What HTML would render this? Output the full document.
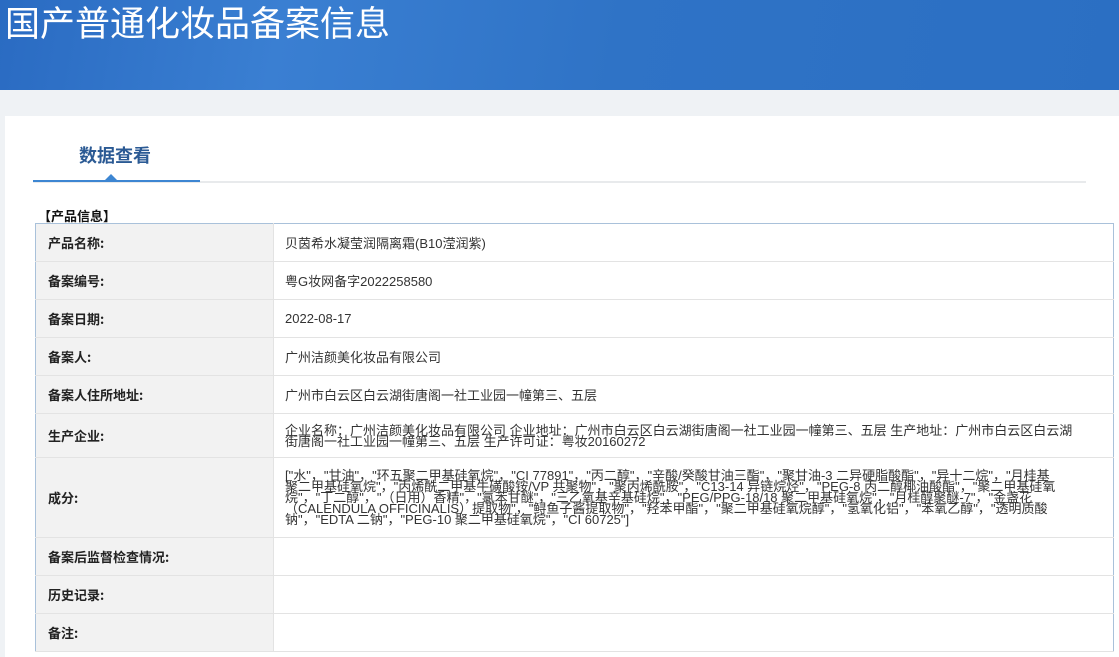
<!DOCTYPE html>
<html><head><meta charset="utf-8"><style>
*{margin:0;padding:0;box-sizing:border-box}
body{width:1119px;height:657px;overflow:hidden;background:#eff2f5;font-family:"Liberation Sans","Noto Sans CJK SC",sans-serif;position:relative}
.hdr{position:absolute;left:0;top:0;width:1119px;height:90px;background:linear-gradient(100deg,#2a6bc2 0%,#3a7fd2 25%,#2f73c6 55%,#2b6fc3 100%)}
.hdr h1{position:absolute;left:5px;top:-4px;color:#fff;font-weight:normal;font-size:35px;font-family:"Noto Sans CJK SC",sans-serif}
.panel{position:absolute;left:5px;top:116px;width:1114px;height:541px;background:#fff}
.tab{position:absolute;left:79px;top:142px;font-size:18px;font-weight:bold;color:#2b5a94;font-family:"Noto Sans CJK SC",sans-serif}
.gl{position:absolute;left:33px;top:181px;width:1053px;height:2px;background:#e8eaec}
.bl{position:absolute;left:33px;top:180px;width:167px;height:2px;background:#3d86d2}
.tri{position:absolute;left:105px;top:174px;width:0;height:0;border-left:6px solid transparent;border-right:6px solid transparent;border-bottom:6px solid #3d86d2}
.sec{position:absolute;left:38px;top:206px;font-size:13px;font-weight:bold;color:#111;font-family:"Noto Sans CJK SC",sans-serif}
table{position:absolute;left:35px;top:223px;width:1079px;border-collapse:collapse;border:1px solid #a9c1da;font-size:13px;color:#333;font-family:"Liberation Sans","Noto Sans CJK SC",sans-serif}
td{border-bottom:1px solid #e3e3e3;vertical-align:middle}
td.l{width:238px;background:#f2f2f2;padding-left:12px;font-weight:bold;font-size:13px;color:#222;border-right:1px solid #e3e3e3;font-family:"Noto Sans CJK SC",sans-serif}
td.v{padding-left:11px;padding-right:55px}
td.p{padding-right:40px}
.t{line-height:11px}
</style></head><body>
<div class="hdr"><h1>国产普通化妆品备案信息</h1></div>
<div class="panel"></div>
<div class="tab">数据查看</div>
<div class="gl"></div><div class="bl"></div><div class="tri"></div>
<div class="sec">【产品信息】</div>
<table>
<tr style="height:38px"><td class="l">产品名称:</td><td class="v">贝茵希水凝莹润隔离霜(B10滢润紫)</td></tr>
<tr style="height:38px"><td class="l">备案编号:</td><td class="v">粤G妆网备字2022258580</td></tr>
<tr style="height:38px"><td class="l">备案日期:</td><td class="v">2022-08-17</td></tr>
<tr style="height:38px"><td class="l">备案人:</td><td class="v">广州洁颜美化妆品有限公司</td></tr>
<tr style="height:38px"><td class="l">备案人住所地址:</td><td class="v">广州市白云区白云湖街唐阁一社工业园一幢第三、五层</td></tr>
<tr style="height:44px"><td class="l">生产企业:</td><td class="v t p">企业名称：广州洁颜美化妆品有限公司 企业地址：广州市白云区白云湖街唐阁一社工业园一幢第三、五层 生产地址：广州市白云区白云湖街唐阁一社工业园一幢第三、五层 生产许可证：粤妆20160272</td></tr>
<tr style="height:80px"><td class="l">成分:</td><td class="v t">["水"，"甘油"，"环五聚二甲基硅氧烷"，"CI 77891"，"丙二醇"，"辛酸/癸酸甘油三酯"，"聚甘油-3 二异硬脂酸酯"，"异十二烷"，"月桂基聚二甲基硅氧烷"，"丙烯酰二甲基牛磺酸铵/VP 共聚物"，"聚丙烯酰胺"，"C13-14 异链烷烃"，"PEG-8 丙二醇椰油酸酯"，"聚二甲基硅氧烷"，"丁二醇"，"（日用）香精"，"氯苯甘醚"，"三乙氧基辛基硅烷"，"PEG/PPG-18/18 聚二甲基硅氧烷"，"月桂醇聚醚-7"，"金盏花（CALENDULA OFFICINALIS）提取物"，"鲟鱼子酱提取物"，"羟苯甲酯"，"聚二甲基硅氧烷醇"，"氢氧化铝"，"苯氧乙醇"，"透明质酸钠"，"EDTA 二钠"，"PEG-10 聚二甲基硅氧烷"，"CI 60725"]</td></tr>
<tr style="height:38px"><td class="l">备案后监督检查情况:</td><td class="v"></td></tr>
<tr style="height:38px"><td class="l">历史记录:</td><td class="v"></td></tr>
<tr style="height:38px"><td class="l">备注:</td><td class="v"></td></tr>
</table>
</body></html>
